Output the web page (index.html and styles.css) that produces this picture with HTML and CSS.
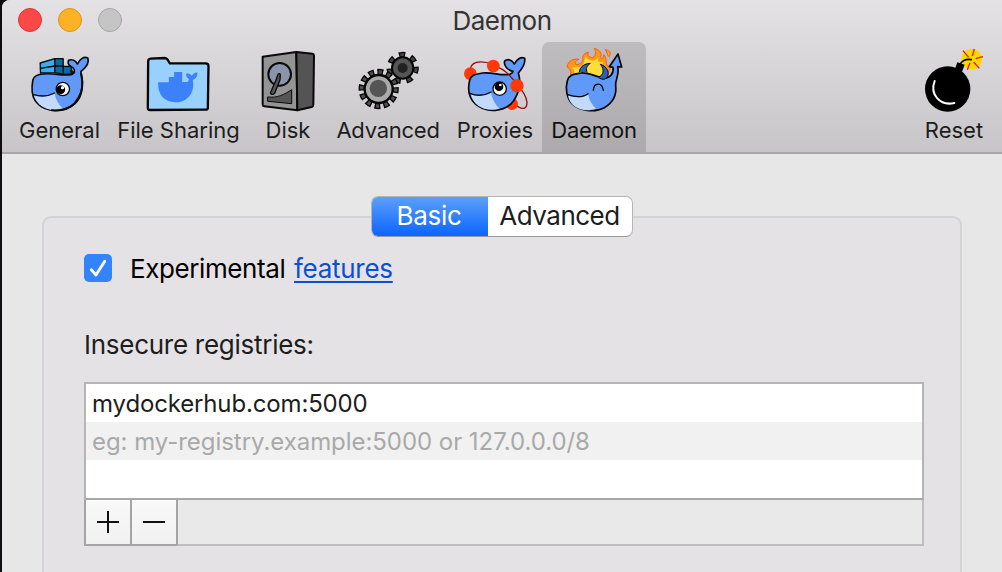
FILE: index.html
```html
<!DOCTYPE html>
<html lang="en">
<head>
<meta charset="utf-8">
<title>Daemon</title>
<link rel="stylesheet" href="styles.css">
</head>
<body>
<div class="window">
  <header class="chrome">
    <div class="titlebar">
      <div class="lights"><i class="light close"></i><i class="light minimize"></i><i class="light disabled"></i></div>
      <h1 class="title">Daemon</h1>
    </div>
    <nav class="toolbar">
      <div class="item general">
        <svg class="icon" viewBox="74.5 138 210 210" fill="none" stroke="#0a0a0a" stroke-width="5" stroke-linejoin="round" stroke-linecap="round">
          <path fill="#6199f8" d="M98 240C101 228 112 223 130 222C160 218 187 229 215 223C224 216 225 210 219 204C207 199 202 190 205 181C215 177 226 181 232 192C239 177 251 168 263 174C268 187 257 203 242 215C248 238 249 269 234 294C209 342 132 343 105 302C94 286 95 257 98 240Z"/>
          <path fill="#c4dafd" stroke="none" d="M102 287C124 292 146 289 164 281C166 298 177 315 187 324C154 339 113 323 102 287Z"/>
          <path d="M101 284C124 291 146 288 163 279" stroke-width="4"/>
          <path fill="#36aef2" stroke-width="4" d="M120 189L164 176V218L121 219Z"/>
          <path fill="#086aa4" stroke-width="4" d="M164 176H189V199H212L218 222L190 223L164 218Z"/>
          <path stroke-width="4" d="M121 205L164 198H189V222"/>
          <path fill="#0a0a0a" d="M211 212L225 218L214 224Z" stroke-width="2"/>
          <circle cx="188" cy="267" r="20" fill="#fff" stroke-width="4"/><circle cx="182" cy="269" r="13" fill="#000" stroke="none"/><circle cx="187" cy="263" r="5" fill="#fff" stroke="none"/>
          <path d="M243 222C251 251 247 289 225 310C208 326 180 333 155 331" stroke-width="6"/>
        </svg>
        <span class="label">General</span>
      </div>
      <div class="item sharing">
        <svg class="icon" viewBox="12.5 18 210 210" fill="#3c81fa" stroke-linejoin="round">
          <path fill="#98d1fe" stroke="#050505" stroke-width="7" d="M25 64Q25 57 32 56L75 54Q80 54 84 60L90 70L198 70Q206 70 206 78L204 203Q204 209 197 209L31 210Q24 210 24 203Z"/>
          <path d="M55 127H87V111H103V96H127V126H143Q148 120 147 117C139 112 138 106 140 100C148 100 153 103 156 108C160 101 166 97 173 98C173 110 166 117 159 119C159 125 161 131 160 140C157 168 136 187 106 187C74 186 53 165 55 127Z"/>
        </svg>
        <span class="label">File Sharing</span>
      </div>
      <div class="item disk">
        <svg class="icon" viewBox="9 18 210 210" stroke="#090909" stroke-width="6" stroke-linejoin="round" stroke-linecap="round">
          <path fill="#949494" d="M38 50L139 36L142 211L43 199Q38 199 38 192Z"/>
          <path fill="#545454" d="M139 36L188 41Q192 42 192 47L190 194Q190 199 185 201L142 211Z"/>
          <circle cx="89" cy="103" r="34" fill="#8995aa"/>
          <path fill="#555" stroke-width="4" d="M83 105Q87 98 91 103L90 119L74 160Q67 167 61 159L79 118Z"/>
          <path fill="#555" stroke-width="3" d="M54 171C82 175 104 163 125 149V191L54 184Z"/>
        </svg>
        <span class="label">Disk</span>
      </div>
      <div class="item advanced">
        <svg class="icon" viewBox="67 18 210 210" fill="none">
          <g transform="rotate(-5 216 84)">
            <circle cx="216" cy="84" r="40.5" stroke="#080808" stroke-width="16" stroke-dasharray="19 17.35"/>
            <circle cx="216" cy="84" r="40" stroke="#474747" stroke-width="9" stroke-dasharray="11 24.9" stroke-dashoffset="-4"/>
          </g>
          <circle cx="216" cy="84" r="32" fill="#555" stroke="#080808" stroke-width="6"/><circle cx="216" cy="84" r="15" fill="#222"/>
          <g transform="rotate(-6 144 147)">
            <circle cx="144" cy="147" r="51" stroke="#080808" stroke-width="19" stroke-dasharray="17 9.7"/>
            <circle cx="144" cy="147" r="51" stroke="#505050" stroke-width="11" stroke-dasharray="9 17.7" stroke-dashoffset="-4"/>
          </g>
          <circle cx="144" cy="147" r="42" fill="#aaa" stroke="#080808" stroke-width="7"/><circle cx="143" cy="145" r="26" fill="#555"/>
        </svg>
        <span class="label">Advanced</span>
      </div>
      <div class="item proxies">
        <svg class="icon" viewBox="30 18 210 210" fill="none" stroke="#070707" stroke-width="5" stroke-linejoin="round" stroke-linecap="round">
          <path stroke="#960812" stroke-width="4" d="M60 98C58 63 90 59 130 73M190 188C214 211 230 211 231 188C229 170 218 151 203 138"/>
          <circle cx="186" cy="192" r="18" fill="#fe3908" stroke="none"/><circle cx="61" cy="101" r="19" fill="#fe3908" stroke="none"/>
          <path fill="#6199f8" d="M59 121C64 103 79 103 98 99C128 95 157 110 181 102Q190 98 189 94C173 91 160 77 164 63C174 55 186 60 193 72C201 56 214 49 224 55C227 72 216 87 205 99C214 126 208 158 191 182C166 217 108 221 76 192C55 172 53 145 59 121Z"/>
          <path fill="#c4dafd" stroke="none" d="M63 164C85 170 107 167 123 159C126 177 136 193 148 206C109 217 71 199 63 164Z"/>
          <path d="M60 160C83 169 106 166 123 156" stroke-width="4"/>
          <path stroke="#960812" stroke-width="4" d="M130 77C158 84 183 105 203 138"/>
          <circle cx="130" cy="78" r="19" fill="#fe3908" stroke="none"/><circle cx="201" cy="137" r="20" fill="#fe3908" stroke="none"/>
          <circle cx="149" cy="146" r="20" fill="#fff" stroke-width="4"/><circle cx="147" cy="140" r="13" fill="#000" stroke="none"/><circle cx="151" cy="135" r="4" fill="#fff" stroke="none"/>
        </svg>
        <span class="label">Proxies</span>
      </div>
      <div class="item daemon selected">
        <svg class="icon" viewBox="57 33 210 210" fill="none" stroke="#070707" stroke-width="5" stroke-linejoin="round" stroke-linecap="round">
          <path fill="#ff9814" stroke="#fa5b17" stroke-width="3" d="M92 119C94 104 86 98 81 96C84 79 99 69 117 73C105 77 105 83 108 88C120 90 127 82 129 74C126 60 134 54 145 52C141 64 149 67 158 68C170 61 167 48 163 40C181 46 187 55 181 67C185 75 193 66 191 59C203 72 195 83 203 94L213 91C208 112 200 122 181 127Z"/>
          <path fill="#ffdd38" stroke="none" d="M101 119C107 106 99 101 95 98C107 96 119 100 127 91C136 82 132 70 138 66C143 77 156 80 170 72L175 67C170 82 181 84 188 79C186 94 196 98 202 103L183 123Z"/>
          <path fill="#ffa51c" stroke="#fa5b17" stroke-width="3" d="M196 45C207 44 212 51 211 58L208 65C199 61 206 54 196 45Z"/>
          <path fill="#6199f8" d="M82 137C88 117 105 117 124 114C147 112 168 126 193 130C210 129 222 116 219 97L208 95L234 57L245 96L233 95C239 119 225 136 227 151C231 183 215 205 193 218C163 234 119 228 96 206C79 188 76 159 82 137Z"/>
          <path fill="#c4dafd" stroke="none" d="M84 182C105 188 130 189 145 178C147 195 157 211 168 221C130 234 91 218 84 182Z"/>
          <path d="M83 179C105 186 129 188 144 176M160 166C161 143 186 140 190 166" stroke-width="4"/>
          <path fill="#2b62b8" stroke-width="3" d="M118 111C119 96 132 86 151 85C140 92 137 101 141 112"/>
          <path fill="#2b62b8" stroke-width="3" d="M182 88C204 96 211 117 199 129C190 136 181 132 175 126C191 121 194 106 182 88Z"/>
        </svg>
        <span class="label">Daemon</span>
      </div>
      <div class="item reset">
        <svg class="icon" viewBox="87 33 210 210" fill="none" stroke-linecap="round">
          <circle cx="245" cy="72" r="31" fill="#fed800"/>
          <path stroke="#f21712" stroke-width="4" stroke-linecap="butt" d="M219 47L236 67M253 42L247 63M257 71L279 65M251 81L268 100M240 83L232 104"/>
          <circle cx="173" cy="162" r="68" fill="#000"/>
          <path fill="#000" d="M202 82L224 89L215 113L194 104Z"/>
          <path stroke="#000" stroke-width="5" d="M211 86C219 75 230 71 244 74"/>
          <path stroke="#fff" stroke-width="6" d="M134 138C119 177 149 214 193 204"/>
        </svg>
        <span class="label">Reset</span>
      </div>
    </nav>
  </header>
  <main class="content">
    <div class="segments"><span class="segment active"><span class="basic">Basic</span></span><span class="segment"><span class="adv">Advanced</span></span></div>
    <section class="panel">
      <div class="experimental">
        <span class="checkbox"><svg viewBox="0 0 28 28" fill="none" stroke="#fff" stroke-width="2.8" stroke-linecap="round" stroke-linejoin="round"><path d="M7.3 15.8L12 21L20.7 7.3"/></svg></span>
        <span class="exp-text">Experimental</span><a class="link">features</a>
      </div>
      <div class="heading"><span>Insecure registries:</span></div>
      <div class="list">
        <div class="row"><span class="entry">mydockerhub.com:5000</span></div>
        <div class="row hint"><span class="example">eg: my-registry.example:5000 or 127.0.0.0/8</span></div>
        <div class="row"></div>
      </div>
      <div class="actions">
        <span class="action"><svg viewBox="0 0 44 44"><path d="M11 22H33M22 11V33"/></svg></span>
        <span class="action"><svg viewBox="0 0 44 44"><path d="M11 22H33"/></svg></span>
        <span class="rest"></span>
      </div>
    </section>
  </main>
</div>
</body>
</html>
```
FILE: styles.css
```css
* { box-sizing: border-box; }
body { margin: 0; padding-left: 2px; height: 572px; overflow: hidden; background: #0d0c10; font-family: Inter, "Liberation Sans", sans-serif; color: #1d1d1d; }
.window { height: 572px; overflow: hidden; background: #e7e7e7; border-top-left-radius: 8px; display: flex; flex-direction: column; }
.chrome { height: 154px; flex: none; background: linear-gradient(#e4e2e4, #c7c5c8); border-bottom: 2px solid #a8a6a8; }
.titlebar { height: 42px; display: grid; grid-template-columns: 200px 1fr 200px; align-items: center; }
.lights { display: flex; gap: 16px; padding-left: 16px; height: 24px; margin-top: -2px; }
.light { width: 24px; height: 24px; border-radius: 50%; border: 1px solid; }
.close { background: #fc4948; border-color: #df3436; }
.minimize { background: #fdb225; border-color: #df941a; }
.disabled { background: #c5c5c5; border-color: #a5a5a5; }
.title { margin: 0; text-align: center; font-size: 26px; line-height: 42px; font-weight: 400; letter-spacing: -0.55px; color: #343434; }
.toolbar { display: flex; height: 110px; padding: 0 9px 0 8px; }
.item { height: 110px; padding-top: 4px; display: flex; flex-direction: column; align-items: center; flex: none; }
.general { width: 99px; } .sharing { width: 139px; } .disk { width: 80px; } .advanced { width: 120px; } .proxies { width: 94px; } .daemon { width: 104px; }
.reset { width: 78px; margin-left: auto; }
.selected { background: linear-gradient(#bebcbf, #acaaac); border-radius: 7px 7px 0 0; color: #111; }
.icon { width: 70px; height: 70px; flex: none; display: block; }
.label { font-size: 22px; line-height: 28px; white-space: nowrap; }
.advanced .label { letter-spacing: -0.25px; }
.daemon .label { letter-spacing: -0.15px; }
.content { flex: 1; padding: 42px 40px 0; display: flex; flex-direction: column; align-items: center; }
.segments { display: flex; width: 262px; height: 41px; flex: none; border-radius: 7px; background: #fff; border: 1px solid #b5b5b5; border-bottom-color: #999; overflow: hidden; z-index: 1; margin: 0 1px -21px 0; }
.segment { flex: 1; display: flex; align-items: center; justify-content: center; font-size: 26px; line-height: 38px; padding-bottom: 1px; }
.active { flex: none; width: 117px; margin: -1px 0 -1px -1px; color: #fff; background: linear-gradient(#5ca2fa, #0c62ff); }
.basic { letter-spacing: -0.3px; }
.adv { letter-spacing: -0.5px; }
.panel { width: 920px; height: 400px; flex: none; border: 2px solid #d3d2d4; border-radius: 9px; background: #e4e2e5; padding: 32px 36px 0 40px; }
.experimental { display: flex; align-items: center; height: 36px; font-size: 26px; color: #000; }
.checkbox { width: 28px; height: 28px; border-radius: 5px; background: #3384fc; margin-right: 18px; }
.checkbox svg { display: block; }
.exp-text { width: 164px; white-space: nowrap; letter-spacing: -0.4px; }
.link { color: #0a50d2; letter-spacing: -0.28px; text-decoration: underline; text-decoration-thickness: 2px; text-underline-offset: 3px; }
.heading { margin-top: 41px; height: 36px; line-height: 36px; font-size: 26px; letter-spacing: -0.27px; }
.list { margin-top: 19px; border: 2px solid #b5b5b5; border-bottom-color: #a7a7a7; background: #fff; }
.row { height: 38px; padding-left: 6px; line-height: 39px; font-size: 24px; white-space: nowrap; }
.entry { letter-spacing: -0.15px; }
.example { letter-spacing: -0.05px; }
.hint { background: #f1f1f1; color: #a9a9a9; }
.actions { display: flex; height: 46px; }
.action { width: 46px; height: 46px; border-right: 2px solid #a4a4a4; border-bottom: 2px solid #a4a4a4; background: linear-gradient(#f9f9f9, #f1f1f1); }
.action:first-child { width: 48px; border-left: 2px solid #a4a4a4; }
.action svg { display: block; width: 44px; height: 44px; stroke: #111; stroke-width: 2; }
.rest { flex: 1; border-right: 2px solid #bebebe; border-bottom: 2px solid #bebebe; background: #e9e9e9; }
```
